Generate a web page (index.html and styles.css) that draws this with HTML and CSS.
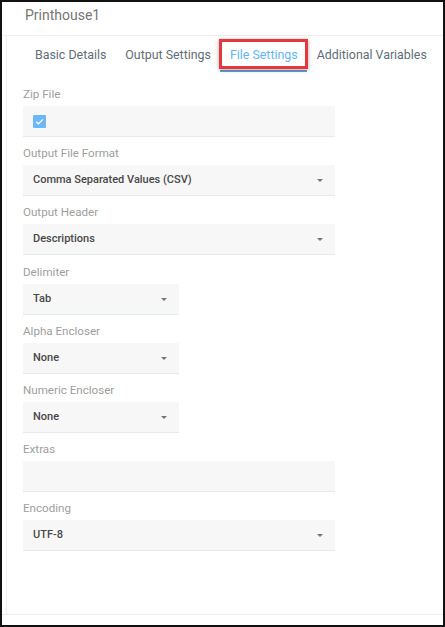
FILE: index.html
```html
<!DOCTYPE html>
<html>
<head>
    <meta charset="UTF-8">
    <title>Printhouse1</title>
    <link rel="stylesheet" href="styles.css">
</head>
<body>
    <div class="frame">
        <div class="title">Printhouse1</div>
        <div class="panel">
            <nav class="tabs">
                <span class="tab">Basic Details</span>
                <span class="tab">Output Settings</span>
                <span class="tab active">File Settings</span>
                <span class="tab">Additional Variables</span>
            </nav>
            <form class="form">
                <div class="field">
                    <label>Zip File</label>
                    <div class="box">
                        <span class="check">
                            <svg width="13" height="13" viewBox="0 0 13 13"><path d="M3.2 6.8 L5.4 8.9 L9.8 4.4" fill="none" stroke="#fff" stroke-width="1.3"/></svg>
                        </span>
                    </div>
                </div>
                <div class="field">
                    <label>Output File Format</label>
                    <div class="box select">Comma Separated Values (CSV)</div>
                </div>
                <div class="field">
                    <label>Output Header</label>
                    <div class="box select">Descriptions</div>
                </div>
                <div class="field">
                    <label>Delimiter</label>
                    <div class="box select small">Tab</div>
                </div>
                <div class="field">
                    <label>Alpha Encloser</label>
                    <div class="box select small">None</div>
                </div>
                <div class="field">
                    <label>Numeric Encloser</label>
                    <div class="box select small">None</div>
                </div>
                <div class="field">
                    <label>Extras</label>
                    <div class="box"></div>
                </div>
                <div class="field">
                    <label>Encoding</label>
                    <div class="box select">UTF-8</div>
                </div>
            </form>
        </div>
        <div class="footer"></div>
    </div>
</body>
</html>
```

FILE: styles.css
```css
* {
    box-sizing: border-box;
}

body {
    margin: 0;
    font-family: Roboto, "Liberation Sans", sans-serif;
    background-color: #ffffff;
}

.frame {
    width: 445px;
    height: 627px;
    border: 2px solid #111111;
    display: flex;
    flex-direction: column;
}

.title {
    padding: 3px 0 10px 23px;
    line-height: 20px;
    font-size: 14px;
    color: #757575;
    border-bottom: 1px solid #eeeeee;
}

.panel {
    height: 578px;
    margin-left: 4px;
    border-left: 1px solid #eeeeee;
}

.footer {
    flex: 1;
    border-top: 1px solid #eeeeee;
}

.tabs {
    display: flex;
    padding: 3px 0 0 18.5px;
}

.tab {
    position: relative;
    padding: 0 9.5px;
    line-height: 31px;
    font-size: 12.4px;
    color: #5f6e78;
    border-bottom: 2px solid transparent;
    white-space: nowrap;
}

.tab.active {
    color: #64b5f6;
    border-bottom-color: #6a9fcf;
}

.tab.active::after {
    content: "";
    position: absolute;
    top: 0;
    left: -1px;
    right: -1px;
    bottom: 1px;
    border: 3px solid #e8363e;
    box-shadow: 0 1px 4px rgba(0, 0, 0, 0.35);
}

.form {
    padding: 14px 0 0 16px;
}

.field {
    margin-bottom: 8.2px;
}

.field label {
    display: block;
    line-height: 16px;
    font-size: 11.6px;
    color: #9e9e9e;
    margin-bottom: 4px;
}

.box {
    position: relative;
    width: 312px;
    height: 31px;
    padding-left: 10px;
    line-height: 30px;
    font-size: 11px;
    font-weight: 500;
    color: #484848;
    background-color: #f7f7f7;
    border-bottom: 1px solid #e4ebee;
    border-radius: 2px 2px 0 0;
    display: flex;
    align-items: center;
}

.box.small {
    width: 156px;
}

.select::after {
    content: "";
    position: absolute;
    right: 12px;
    top: 14px;
    border-left: 3.5px solid transparent;
    border-right: 3.5px solid transparent;
    border-top: 3.5px solid #757575;
}

.check {
    width: 13px;
    height: 13px;
    border-radius: 1px;
    background-color: #6cb8f6;
    display: flex;
}
```
